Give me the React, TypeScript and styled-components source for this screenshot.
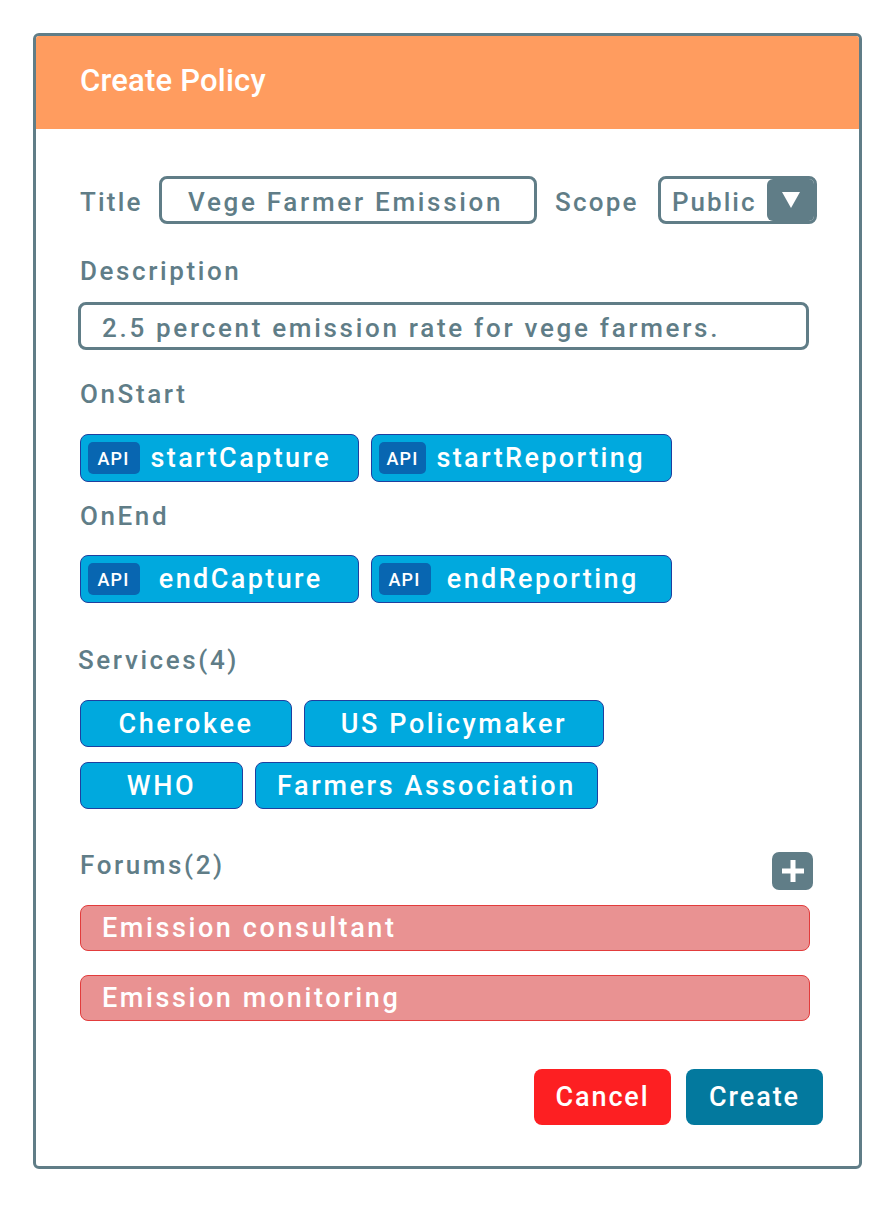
import React from "react";
import styled, { createGlobalStyle } from "styled-components";

const ink = "#607d87";

const GlobalStyle = createGlobalStyle`
  html, body { margin: 0; padding: 0; background: #ffffff; }
  body { font-family: Roboto, "Liberation Sans", sans-serif; font-weight: 500; }
  * { box-sizing: border-box; }
`;

const Page = styled.div`
  padding: 33px 0 40px 33px;
`;

const Card = styled.div`
  width: 829px;
  border: 3px solid ${ink};
  border-radius: 6px;
  overflow: hidden;
  background: #ffffff;
`;

const Header = styled.div`
  height: 93px;
  background: #ff9c5f;
  display: flex;
  align-items: center;
  padding: 0 0 4px 44px;
  color: #ffffff;
  font-size: 31px;
  letter-spacing: 0.2px;
`;

const Body = styled.div`
  display: flex;
  flex-direction: column;
  padding: 47px 36px 41px 44px;
`;

const Label = styled.div<{ $mt?: number; $ml?: number }>`
  margin-top: ${(p) => p.$mt ?? 0}px;
  margin-left: ${(p) => p.$ml ?? 0}px;
  color: ${ink};
  font-size: 26px;
  letter-spacing: 2.6px;
  line-height: 30px;
  white-space: nowrap;
`;

const TitleRow = styled.div`
  display: grid;
  grid-template-columns: 79px 378px 121px 159px;
  align-items: center;
  height: 48px;
`;

const ScopeLabel = styled(Label)`
  padding: 3px 0 0 18px;
  letter-spacing: 2.2px;
`;

const TitleLabel = styled(Label)`
  padding-top: 3px;
  letter-spacing: 2.2px;
`;

const TextBox = styled.div<{ $w?: number; $pad: number; $mt?: number; $ml?: number }>`
  width: ${(p) => (p.$w ? `${p.$w}px` : "auto")};
  height: 48px;
  margin-top: ${(p) => p.$mt ?? 0}px;
  margin-left: ${(p) => p.$ml ?? 0}px;
  border: 3px solid ${ink};
  border-radius: 8px;
  display: flex;
  align-items: center;
  padding: 3px 0 0 ${(p) => p.$pad}px;
  color: ${ink};
  font-size: 26px;
  letter-spacing: 2.7px;
  white-space: nowrap;
`;

const Select = styled.div`
  height: 48px;
  border: 3px solid ${ink};
  border-radius: 8px;
  display: flex;
  align-items: stretch;
  overflow: hidden;
  color: ${ink};
  font-size: 26px;
  letter-spacing: 2px;
`;

const SelectValue = styled.div`
  flex: 1;
  display: flex;
  align-items: center;
  padding: 3px 0 0 11px;
`;

const Caret = styled.div`
  width: 47px;
  background: ${ink};
  border-radius: 6px 0 0 6px;
  display: flex;
  align-items: center;
  justify-content: center;
`;

const ChipRow = styled.div<{ $mt: number }>`
  display: flex;
  gap: 12px;
  margin-top: ${(p) => p.$mt}px;
`;

const ApiChip = styled.div<{ $w: number }>`
  width: ${(p) => p.$w}px;
  height: 48px;
  background: #00a9de;
  border: 1.5px solid #1f3f9f;
  border-radius: 8px;
  display: flex;
  align-items: center;
  padding-left: 6.5px;
`;

const Badge = styled.div`
  width: 52px;
  height: 32px;
  border-radius: 5px;
  background: #0866b1;
  color: #ffffff;
  font-size: 18px;
  letter-spacing: 1.2px;
  display: flex;
  align-items: center;
  justify-content: center;
`;

const ChipText = styled.div`
  flex: 1;
  text-align: center;
  padding: 0 26px 0 10px;
  color: #ffffff;
  font-size: 27px;
  letter-spacing: 2.4px;
  white-space: nowrap;
`;

const ServiceChip = styled.div<{ $w: number }>`
  width: ${(p) => p.$w}px;
  height: 47px;
  background: #00a9de;
  border: 1.5px solid #1f3f9f;
  border-radius: 8px;
  display: flex;
  align-items: center;
  justify-content: center;
  color: #ffffff;
  font-size: 27px;
  letter-spacing: 2.6px;
  white-space: nowrap;
`;

const ForumHead = styled.div`
  margin-top: 41px;
  height: 40px;
  display: flex;
  justify-content: space-between;
  align-items: flex-start;
`;

const PlusButton = styled.div`
  align-self: flex-end;
  width: 41px;
  height: 38px;
  margin-right: 10px;
  border-radius: 7px;
  background: ${ink};
  display: flex;
  align-items: center;
  justify-content: center;
`;

const ForumBar = styled.div<{ $mt: number }>`
  width: 730px;
  height: 46px;
  margin-top: ${(p) => p.$mt}px;
  background: #e99292;
  border: 1px solid #e23c3c;
  border-radius: 8px;
  display: flex;
  align-items: center;
  padding-left: 21px;
  color: #ffffff;
  font-size: 27px;
  letter-spacing: 2.6px;
`;

const Actions = styled.div`
  margin-top: 48px;
  display: flex;
  justify-content: flex-end;
  gap: 15px;
`;

const ActionButton = styled.button<{ $bg: string }>`
  width: 137px;
  height: 56px;
  border: none;
  border-radius: 8px;
  background: ${(p) => p.$bg};
  color: #ffffff;
  font-family: Roboto, "Liberation Sans", sans-serif;
  font-weight: 500;
  font-size: 27px;
  letter-spacing: 1.9px;
  padding: 0;
  cursor: pointer;
`;

const apiStart = [
  { name: "startCapture", w: 279 },
  { name: "startReporting", w: 301 },
];
const apiEnd = [
  { name: "endCapture", w: 279 },
  { name: "endReporting", w: 301 },
];
const servicesA = [
  { name: "Cherokee", w: 212 },
  { name: "US Policymaker", w: 300 },
];
const servicesB = [
  { name: "WHO", w: 163 },
  { name: "Farmers Association", w: 343 },
];

export default function App() {
  return (
    <Page>
      <GlobalStyle />
      <Card>
        <Header>Create Policy</Header>
        <Body>
          <TitleRow>
            <TitleLabel>Title</TitleLabel>
            <TextBox $pad={26}>Vege Farmer Emission</TextBox>
            <ScopeLabel>Scope</ScopeLabel>
            <Select>
              <SelectValue>Public</SelectValue>
              <Caret>
                <svg width="20" height="18" viewBox="0 0 20 18">
                  <polygon points="1,1 19,1 10,17" fill="#ffffff" />
                </svg>
              </Caret>
            </Select>
          </TitleRow>

          <Label $mt={32}>Description</Label>
          <TextBox $w={731} $pad={21} $mt={16} $ml={-2}>
            2.5 percent emission rate for vege farmers.
          </TextBox>

          <Label $mt={29}>OnStart</Label>
          <ChipRow $mt={25}>
            {apiStart.map((a) => (
              <ApiChip key={a.name} $w={a.w}>
                <Badge>API</Badge>
                <ChipText>{a.name}</ChipText>
              </ApiChip>
            ))}
          </ChipRow>

          <Label $mt={19}>OnEnd</Label>
          <ChipRow $mt={24}>
            {apiEnd.map((a) => (
              <ApiChip key={a.name} $w={a.w}>
                <Badge>API</Badge>
                <ChipText>{a.name}</ChipText>
              </ApiChip>
            ))}
          </ChipRow>

          <Label $mt={42} $ml={-2}>Services(4)</Label>
          <ChipRow $mt={25}>
            {servicesA.map((s) => (
              <ServiceChip key={s.name} $w={s.w}>{s.name}</ServiceChip>
            ))}
          </ChipRow>
          <ChipRow $mt={15}>
            {servicesB.map((s) => (
              <ServiceChip key={s.name} $w={s.w}>{s.name}</ServiceChip>
            ))}
          </ChipRow>

          <ForumHead>
            <Label>Forums(2)</Label>
            <PlusButton>
              <svg width="24" height="24" viewBox="0 0 24 24">
                <rect x="9.5" y="1" width="5" height="22" fill="#ffffff" />
                <rect x="1" y="9.5" width="22" height="5" fill="#ffffff" />
              </svg>
            </PlusButton>
          </ForumHead>
          <ForumBar $mt={15}>Emission consultant</ForumBar>
          <ForumBar $mt={24}>Emission monitoring</ForumBar>

          <Actions>
            <ActionButton $bg="#fd1f22">Cancel</ActionButton>
            <ActionButton $bg="#03799e">Create</ActionButton>
          </Actions>
        </Body>
      </Card>
    </Page>
  );
}
